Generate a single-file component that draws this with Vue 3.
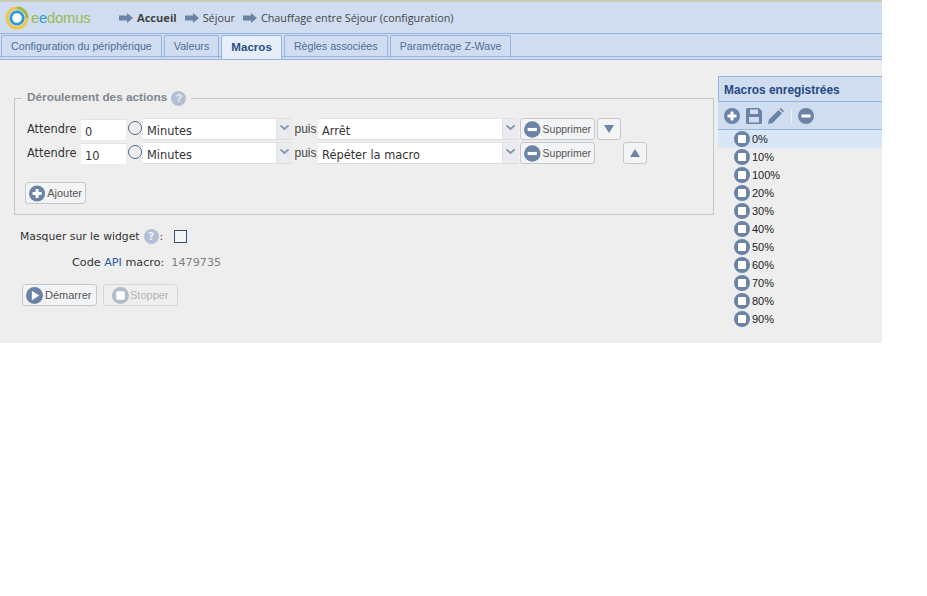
<script setup>
const crumbs = [
  { text: 'Accueil', strong: true },
  { text: 'Séjour' },
  { text: 'Chauffage entre Séjour (configuration)' }
]
const tabs = ['Configuration du périphérique', 'Valeurs', 'Macros', 'Règles associées', 'Paramétrage Z-Wave']
const rows = [
  { wait: '0', action: 'Arrêt', move: 'down' },
  { wait: '10', action: 'Répéter la macro', move: 'up' }
]
const macros = ['0%', '10%', '100%', '20%', '30%', '40%', '50%', '60%', '70%', '80%', '90%']
</script>

<template>
  <div class="app">
    <header class="header">
      <div class="logo">
        <svg width="24" height="24" viewBox="0 0 24 24">
          <circle cx="12" cy="12" r="10" fill="none" stroke="#f0c64a" stroke-width="3" />
          <path d="M12 2A10 10 0 0 1 22 12" fill="none" stroke="#9dbb52" stroke-width="3" />
          <circle cx="12" cy="12" r="6.2" fill="#fff" stroke="#2f9bd3" stroke-width="2.8" />
        </svg>
        <span class="logo-text">e<span class="e1">e</span>domus</span>
      </div>
      <nav class="crumbs">
        <span v-for="c in crumbs" :key="c.text" class="crumb">
          <svg class="arrow" width="14" height="10" viewBox="0 0 14 10"><path d="M0 2.5H8V0L14 5L8 10V7.5H0Z" fill="#6b84a6" /></svg>
          <span :class="{ strong: c.strong }">{{ c.text }}</span>
        </span>
      </nav>
    </header>

    <div class="tabs">
      <div v-for="t in tabs" :key="t" class="tab" :class="{ active: t === 'Macros' }">{{ t }}</div>
    </div>

    <main class="main">
      <section class="left">
        <fieldset class="box">
          <legend class="legend"><span class="legend-text">Déroulement des actions</span> <span class="help">?</span></legend>
          <div class="rows">
            <div v-for="r in rows" :key="r.wait" class="row">
              <span class="label">Attendre</span>
              <span class="input">{{ r.wait }}</span>
              <span class="radio"></span>
              <span class="select unit"><span class="val">Minutes</span><span class="caret"><svg width="9" height="6" viewBox="0 0 9 6"><path d="M0.5 0.5L4.5 4L8.5 0.5" fill="none" stroke="#8495ab" stroke-width="1.8" /></svg></span></span>
              <span class="puis">puis</span>
              <span class="select action"><span class="val">{{ r.action }}</span><span class="caret"><svg width="9" height="6" viewBox="0 0 9 6"><path d="M0.5 0.5L4.5 4L8.5 0.5" fill="none" stroke="#8495ab" stroke-width="1.8" /></svg></span></span>
              <button class="btn del">
                <svg width="17" height="17" viewBox="0 0 16 16"><circle cx="8" cy="8" r="8" fill="#6b84a6" /><rect x="3.5" y="6.5" width="9" height="3" fill="#fff" /></svg>
                <span>Supprimer</span>
              </button>
              <button class="btn move" :class="r.move">
                <svg width="12" height="10" viewBox="0 0 12 10"><path v-if="r.move === 'down'" d="M1 1H11L6 9Z" fill="#6b84a6" /><path v-else d="M1 9H11L6 1Z" fill="#6b84a6" /></svg>
              </button>
            </div>
          </div>
          <button class="btn add">
            <svg width="17" height="17" viewBox="0 0 16 16"><circle cx="8" cy="8" r="8" fill="#6b84a6" /><path d="M3.5 6.5H6.5V3.5H9.5V6.5H12.5V9.5H9.5V12.5H6.5V9.5H3.5Z" fill="#fff" /></svg>
            <span>Ajouter</span>
          </button>
        </fieldset>

        <div class="mask">
          <span>Masquer sur le widget</span>
          <span class="help">?</span>
          <span class="colon">:</span>
          <span class="check"></span>
        </div>
        <div class="code">
          <span>Code <span class="api">API</span> macro:</span>
          <span class="num">1479735</span>
        </div>
        <div class="actions">
          <button class="btn run">
            <svg width="17" height="17" viewBox="0 0 16 16"><circle cx="8" cy="8" r="8" fill="#6b84a6" /><path d="M5.5 3.5L12.5 8L5.5 12.5Z" fill="#fff" /></svg>
            <span>Démarrer</span>
          </button>
          <button class="btn run off">
            <svg width="17" height="17" viewBox="0 0 16 16"><circle cx="8" cy="8" r="8" fill="#b1bccb" /><rect x="4" y="4" width="8" height="8" rx="1" fill="#fff" /></svg>
            <span>Stopper</span>
          </button>
        </div>
      </section>

      <aside class="side">
        <h2 class="side-title">Macros enregistrées</h2>
        <div class="tools">
          <svg width="16" height="16" viewBox="0 0 16 16"><circle cx="8" cy="8" r="8" fill="#6b84a6" /><path d="M3.5 6.5H6.5V3.5H9.5V6.5H12.5V9.5H9.5V12.5H6.5V9.5H3.5Z" fill="#fff" /></svg>
          <svg width="16" height="16" viewBox="0 0 16 16"><path d="M0 1.5A1.5 1.5 0 0 1 1.5 0H13L16 3V14.5A1.5 1.5 0 0 1 14.5 16H1.5A1.5 1.5 0 0 1 0 14.5ZM4 1.5V6H12V1.5ZM3 9V14.5H13V9Z" fill="#6b84a6" fill-rule="evenodd" /></svg>
          <svg width="16" height="16" viewBox="0 0 16 16"><path d="M0 16L1 11.5L10.5 2L14 5.5L4.5 15ZM11.5 1L13 0L16 3L15 4.5Z" fill="#6b84a6" /></svg>
          <span class="sep"></span>
          <svg width="16" height="16" viewBox="0 0 16 16"><circle cx="8" cy="8" r="8" fill="#6b84a6" /><rect x="3.5" y="6.5" width="9" height="3" fill="#fff" /></svg>
        </div>
        <ul class="list">
          <li v-for="(m, i) in macros" :key="m" class="item" :class="{ first: i === 0 }">
            <svg width="16" height="16" viewBox="0 0 16 16"><circle cx="8" cy="8" r="8" fill="#6b84a6" /><rect x="4" y="4" width="8" height="8" rx="1" fill="#fff" /></svg>
            <span>{{ m }}</span>
          </li>
        </ul>
      </aside>
    </main>
  </div>
</template>

<style>
body { background: #fff; }
</style>

<style scoped>
.app {
  width: 882px;
  height: 343px;
  background: #eeeeee;
  font-family: "Liberation Sans", Arial, sans-serif;
  font-size: 12px;
  color: #333;
  display: flex;
  flex-direction: column;
}
.header {
  height: 31px;
  box-sizing: content-box;
  border-top: 2px solid #c9cdb4;
  background: #d0ddf0;
  display: flex;
  align-items: center;
}
.logo { display: flex; align-items: center; margin-left: 5px; width: 112px; gap: 2px; }
.logo-text { font-size: 14.8px; color: #9ab84f; letter-spacing: -0.2px; }
.e1 { color: #2f9bd3; }
.crumbs { display: flex; align-items: center; gap: 8px; margin-left: 2px; }
.crumb { display: flex; align-items: center; gap: 4px; font-family: "Open Sans", sans-serif; font-size: 10.8px; color: #444; }
.strong { font-weight: 700; font-size: 11.1px; }
.tabs {
  height: 24px;
  background: #d0ddf0;
  border-top: 1px solid #95b4de;
  border-bottom: 1px solid #95b4de;
  box-shadow: 0 2px 0 0 #d0ddf0, 0 3px 0 #95b4de;
  display: flex;
  gap: 2px;
  padding-left: 1px;
  box-sizing: border-box;
  margin-bottom: 3px;
}
.tab {
  margin-top: 1px;
  height: 23px;
  box-sizing: border-box;
  padding: 0 9px;
  border: 1px solid #95b4de;
  border-bottom: none;
  border-radius: 2px 2px 0 0;
  color: #4e6d96;
  line-height: 21px;
  font-size: 10.7px;
}
.tab.active {
  background: #e6eef9;
  color: #2c4f85;
  font-weight: 700;
  font-size: 11.6px;
  height: 24px;
}
.main { flex: 1; display: flex; min-height: 0; }
.left { width: 718px; padding: 31px 4px 0 14px; box-sizing: border-box; }
.box {
  margin: 0;
  padding: 12px 0 0 12px;
  height: 124px;
  box-sizing: border-box;
  border: 1px solid #c6c6c6;
  border-radius: 0;
}
.legend {
  padding: 0 5px 0 5px;
  margin-left: -5px;
  font-weight: 700;
  font-size: 11.8px;
  color: #7f8890;
  font-family: "Liberation Sans", sans-serif;
  display: flex;
  align-items: flex-start;
  gap: 4px;
  height: 15px;
}
.legend-text { line-height: 12px; }
.help {
  display: inline-block;
  width: 15px;
  height: 15px;
  border-radius: 50%;
  background: #b1bfd3;
  color: #eef1f6;
  text-align: center;
  font-size: 11px;
  line-height: 15px;
  font-weight: 700;
}
.rows { display: flex; flex-direction: column; gap: 2px; }
.row { display: flex; align-items: center; height: 22px; font-family: "DejaVu Sans", sans-serif; font-size: 11.4px; }
.label { width: 54px; color: #333; }
.input {
  width: 45px;
  height: 21px;
  box-sizing: border-box;
  background: #fff;
  padding: 4px 4px;
  line-height: 16px;
  margin-right: 1px;
  color: #333;
  border-top: 1px solid #e2e2e2;
}
.radio {
  width: 12px;
  height: 12px;
  margin: -3px 1px 0 1px;
  border: 1px solid #4a6a92;
  border-radius: 50%;
}
.select {
  height: 22px;
  box-sizing: border-box;
  background: #fff;
  display: flex;
  border-top: 1px solid #e2e2e2;
  border-bottom: 1px solid #dcdcdc;
}
.select.unit { width: 149px; }
.select.action { width: 200px; }
.val { flex: 1; padding: 4px 3px 2px 4px; line-height: 16px; color: #333; }
.caret {
  width: 16px;
  background: #e9ebee;
  display: flex;
  align-items: center;
  justify-content: center;
  padding-bottom: 3px;
  box-sizing: border-box;
  border-left: 1px solid #e2e2e2;
}
.puis { width: 26px; padding-left: 1px; box-sizing: border-box; text-align: center; font-family: "Liberation Sans", sans-serif; font-size: 12px; color: #444; }
.btn {
  height: 22px;
  box-sizing: border-box;
  background: #f3f4f5;
  border: 1px solid #c4c8cd;
  border-radius: 3px;
  padding: 0 3px;
  display: inline-flex;
  align-items: center;
  gap: 3px;
  font-family: "Liberation Sans", sans-serif;
  font-size: 10.5px;
  color: #555;
}
.del { width: 75px; margin-left: 2px; gap: 2px; }
.move { width: 24px; justify-content: center; }
.move.down { margin-left: 2px; }
.move.up { margin-left: 28px; }
.add { margin: 18px 0 0 -2px; height: 22px; width: 61px; font-size: 11px; gap: 2px; }
.mask { display: flex; align-items: center; margin: 12px 0 0 6px; height: 18px; font-family: "DejaVu Sans", sans-serif; font-size: 10.8px; color: #333; }
.mask .help { margin-left: 4px; }
.colon { margin-left: 1px; margin-right: 11px; }
.check { width: 11px; height: 11px; border: 1px solid #345076; background: #f4f4f4; }
.code { display: flex; gap: 7px; margin: 8px 0 0 58px; height: 18px; align-items: center; font-family: "DejaVu Sans", sans-serif; font-size: 11.2px; color: #333; }
.api { color: #2c5aa0; }
.num { color: #808080; }
.actions { display: flex; gap: 6px; margin: 13px 0 0 8px; }
.run { height: 22px; width: 75px; font-size: 11px; gap: 2px; }
.off { color: #aeb4ba; border-color: #d4d6d9; background: #efefef; padding-left: 8px; gap: 1px; }
.side { width: 164px; }
.side-title {
  margin: 16px 0 0;
  height: 24px;
  box-sizing: content-box;
  background: #d0ddf0;
  border-top: 1px solid #95b4de;
  border-left: 1px solid #95b4de;
  border-bottom: 1px solid #95b4de;
  padding-left: 5px;
  font-size: 11.9px;
  font-weight: 700;
  line-height: 26px;
  color: #234a86;
}
.tools {
  height: 27px;
  background: #d0ddf0;
  border-bottom: 1px solid #95b4de;
  display: flex;
  align-items: center;
  gap: 6px;
  padding-left: 6px;
}
.sep { width: 1px; height: 14px; background: #eef2f8; margin: 0 0 0 1px; }
.list { list-style: none; margin: 0; padding: 0; }
.item { height: 18px; display: flex; align-items: center; gap: 2px; padding-left: 16px; font-size: 11px; color: #222; font-family: "Liberation Sans", sans-serif; }
.item.first { background: #d9e6f6; }
</style>
